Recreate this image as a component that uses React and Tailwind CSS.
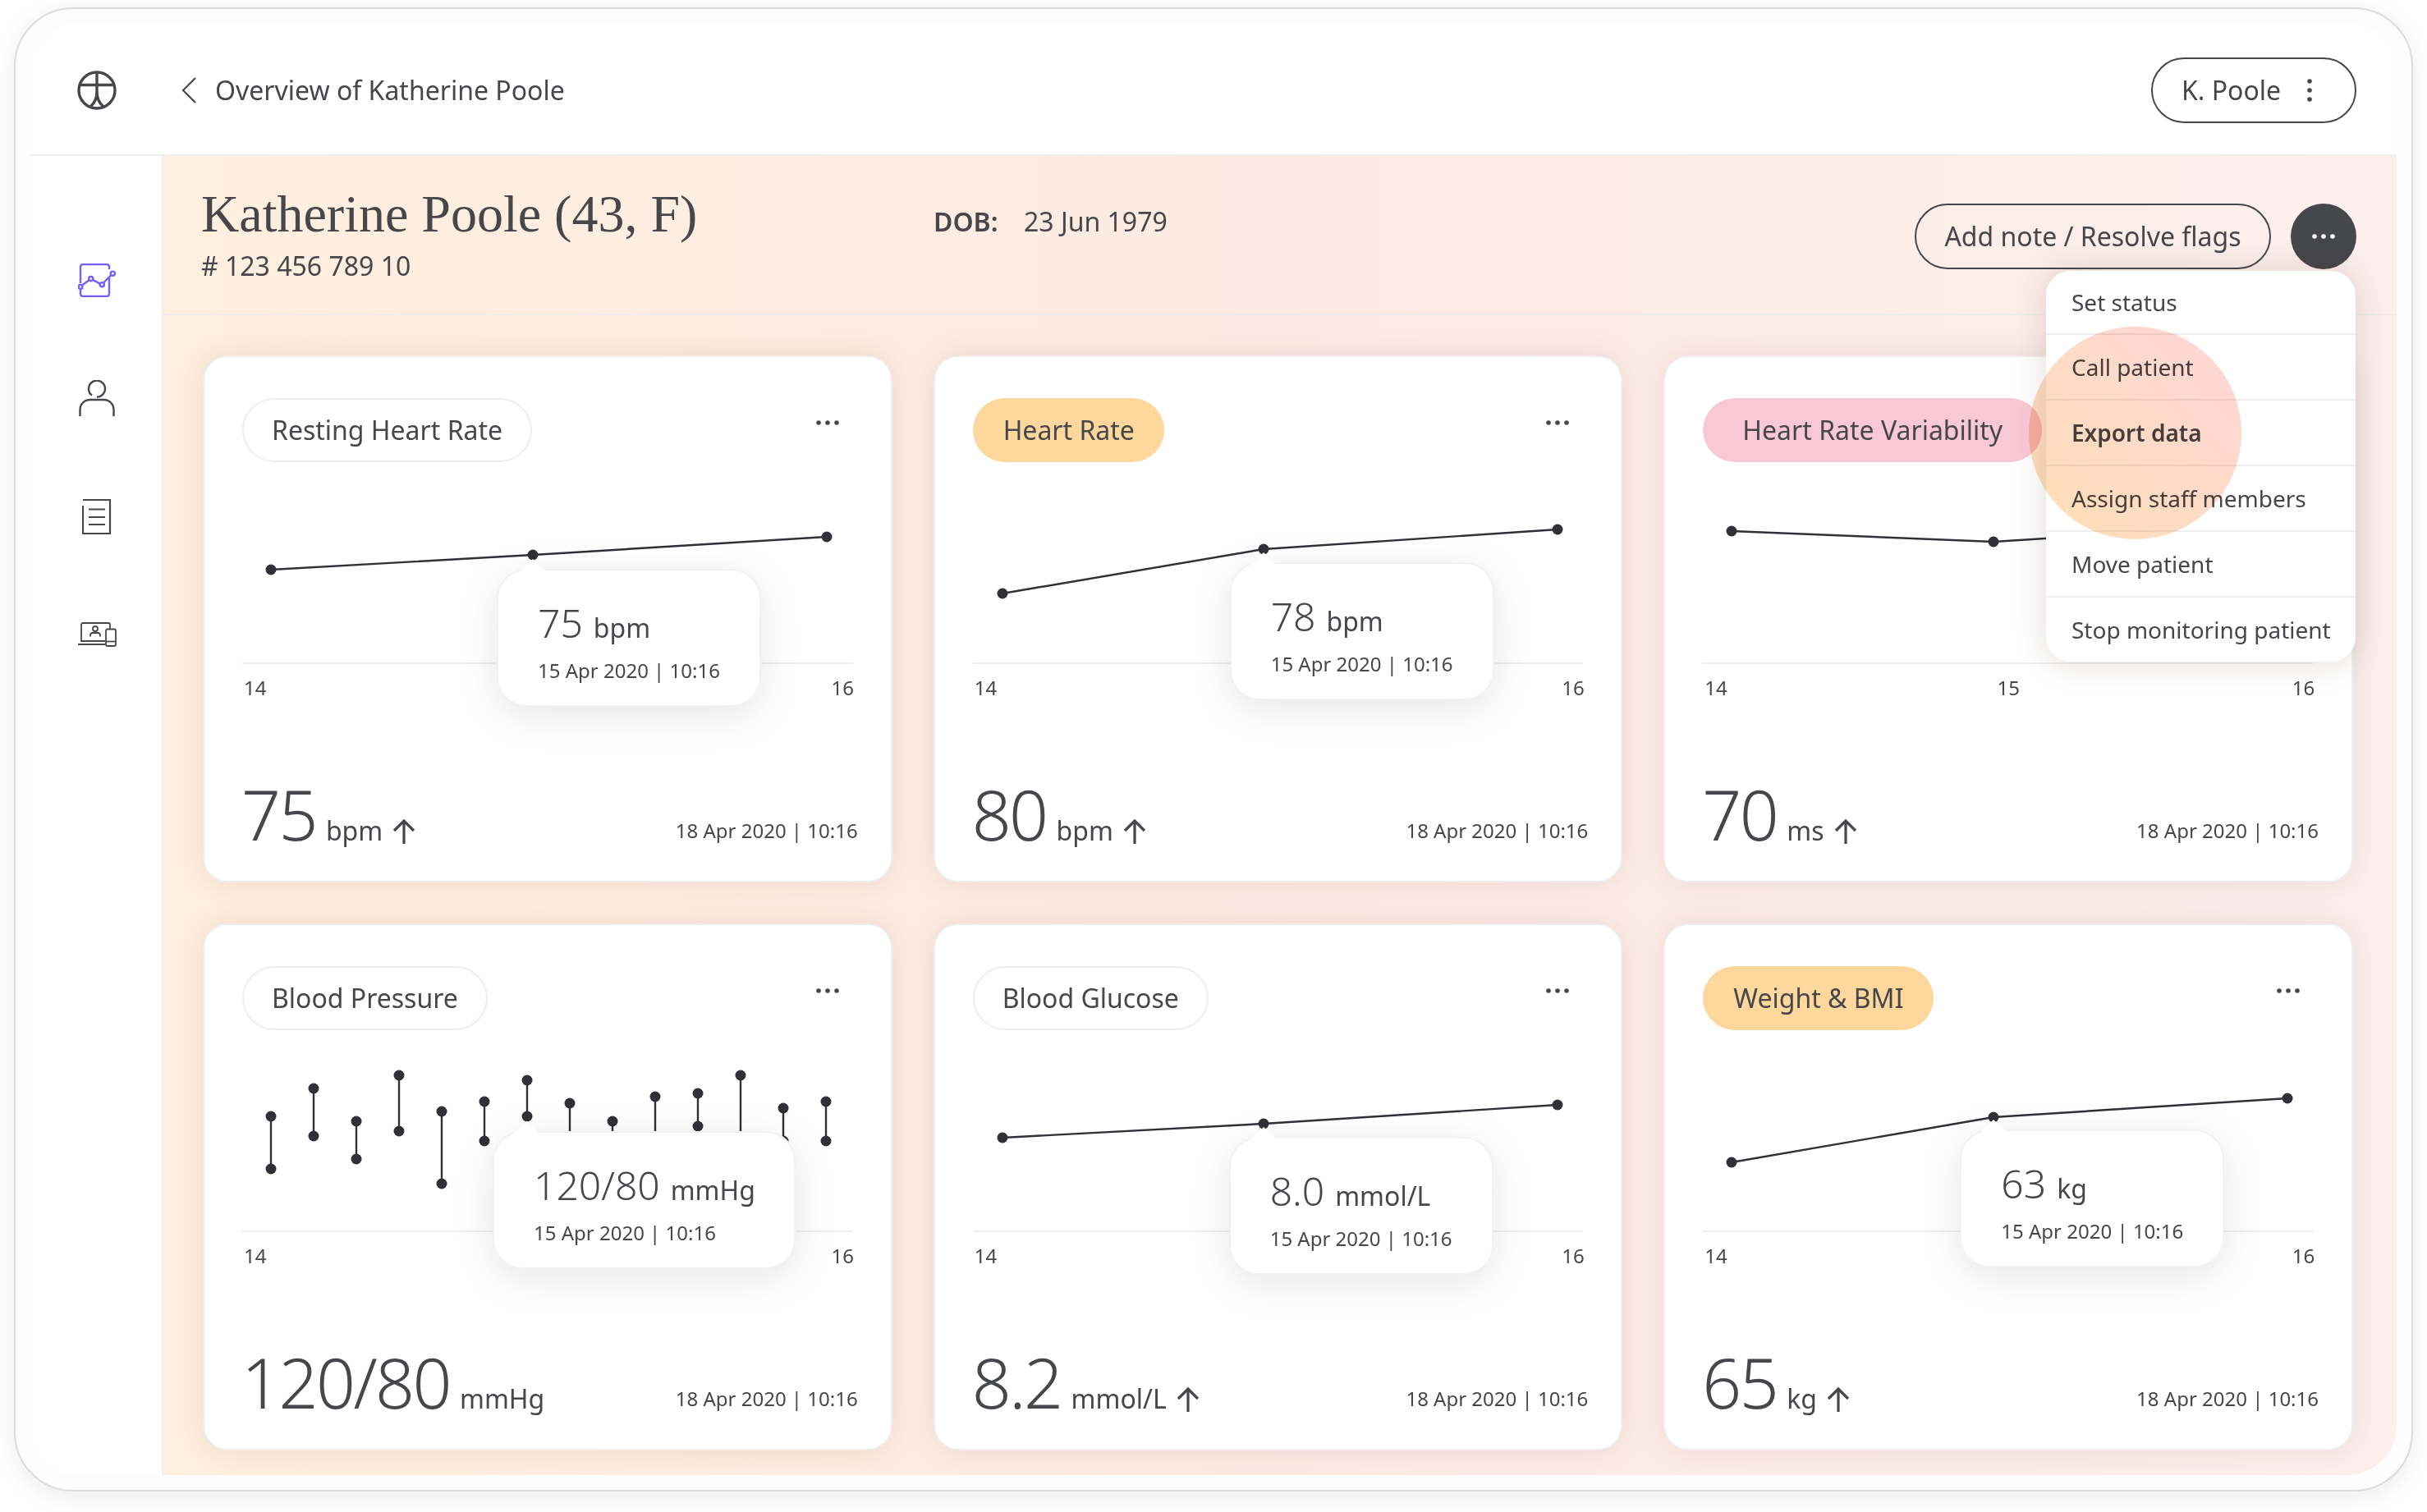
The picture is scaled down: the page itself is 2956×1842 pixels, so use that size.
import React from "react";

const font = { fontFamily: '"Noto Sans", sans-serif' };

const cards = [
  {
    title: "Resting Heart Rate",
    pill: "bg-white border-2 border-[#eeeeee] px-[34px]",
    points: [[35, 131], [354, 113], [712, 91]],
    tip: { left: 310, top: 130, w: 322, value: "75", unit: "bpm", x: 354 },
    value: "75",
    unit: "bpm",
    arrow: true,
  },
  {
    title: "Heart Rate",
    pill: "bg-[#fdd79b] pl-[37px] pr-[36px]",
    points: [[36, 160], [354, 106], [712, 82]],
    tip: { left: 313, top: 122, w: 322, value: "78", unit: "bpm", x: 354 },
    value: "80",
    unit: "bpm",
    arrow: true,
  },
  {
    title: "Heart Rate Variability",
    pill: "bg-[#f9c8d6] px-[48px]",
    points: [[35, 84], [354, 97], [712, 74]],
    labels: ["14", "15", "16"],
    value: "70",
    unit: "ms",
    arrow: true,
  },
  {
    title: "Blood Pressure",
    pill: "bg-white border-2 border-[#eeeeee] px-[34px]",
    bars: [
      [35, 105, 169], [87, 71, 129], [139, 111, 157], [191, 55, 123], [243, 99, 187],
      [295, 87, 135], [347, 61, 105], [399, 89, 135], [451, 111, 135], [503, 81, 135],
      [555, 77, 117], [607, 55, 135], [659, 95, 135], [711, 87, 135],
    ],
    tip: { left: 305, top: 123, w: 369, value: "120/80", unit: "mmHg", x: 347 },
    value: "120/80",
    unit: "mmHg",
    arrow: false,
  },
  {
    title: "Blood Glucose",
    pill: "bg-white border-2 border-[#eeeeee] px-[34px]",
    points: [[36, 131], [354, 114], [712, 91]],
    tip: { left: 312, top: 130, w: 322, value: "8.0", unit: "mmol/L", x: 354 },
    value: "8.2",
    unit: "mmol/L",
    arrow: true,
  },
  {
    title: "Weight & BMI",
    pill: "bg-[#fdd79b] pl-[37px] pr-[36px]",
    points: [[35, 161], [354, 106], [712, 83]],
    tip: { left: 313, top: 121, w: 322, value: "63", unit: "kg", x: 354 },
    value: "65",
    unit: "kg",
    arrow: true,
  },
];

const menuItems = ["Set status", "Call patient", "Export data", "Assign staff members", "Move patient", "Stop monitoring patient"];

function Dots({ color = "#46474b" }) {
  return (
    <svg width="28" height="6" viewBox="0 0 28 6" fill={color}>
      <circle cx="3" cy="3" r="2.8" />
      <circle cx="14" cy="3" r="2.8" />
      <circle cx="25" cy="3" r="2.8" />
    </svg>
  );
}

function Logo() {
  return (
    <svg width="48" height="48" viewBox="0 0 48 48" fill="none" stroke="#46474b" strokeWidth="3.4">
      <circle cx="24" cy="24" r="22" />
      <path d="M3 17.5h42M24 2v24M24 25c0 8-3 15-8 19M24 25c0 8 3 15 8 19" />
    </svg>
  );
}

function ChartIcon() {
  return (
    <svg width="46" height="41" viewBox="0 0 46 41" fill="none" stroke="#7a5cff" strokeWidth="2.4">
      <path d="M3 24V4a3 3 0 0 1 3-3h29a3 3 0 0 1 3 3v3M38 17v20a3 3 0 0 1-3 3H6a3 3 0 0 1-3-3v-5" />
      <path d="M5 26.5l8.5-6.2M18 20l8.800 4.600M31 23.500l9-9" />
      <circle cx="3" cy="28.4" r="2.4" />
      <circle cx="15.7" cy="18.6" r="2.6" />
      <circle cx="29.3" cy="25.7" r="2.6" />
      <circle cx="42.3" cy="12.2" r="2.6" />
    </svg>
  );
}

function PersonIcon() {
  return (
    <svg width="44" height="44" viewBox="0 0 44 44" fill="none" stroke="#46474b" strokeWidth="2.4">
      <path d="M16 18.6A10 10 0 1 1 22 20.6" />
      <path d="M1.5 44v-8a12 12 0 0 1 12-12h17a12 12 0 0 1 12 12v8" />
    </svg>
  );
}

function DocIcon() {
  return (
    <svg width="36" height="43" viewBox="0 0 36 43" fill="none" stroke="#46474b" strokeWidth="2.2">
      <path d="M1 1h33v41H1V8" />
      <path d="M8 12.5h20M8 22h20M8 31h20" strokeWidth="1.8" />
    </svg>
  );
}

function DeviceIcon() {
  return (
    <svg width="47" height="30" viewBox="0 0 47 30" fill="none" stroke="#46474b" strokeWidth="1.8">
      <path d="M4 20V3a2 2 0 0 1 2-2h31a2 2 0 0 1 2 2v5" />
      <path d="M4 20v3h29M0 27h33" />
      <rect x="34" y="8.5" width="12" height="20.5" rx="2" />
      <path d="M34 23.5h12" />
      <circle cx="21" cy="8" r="3" />
      <path d="M15 17.5V16a3 3 0 0 1 3-3h6a3 3 0 0 1 3 3v1.500" />
    </svg>
  );
}

function ArrowUp() {
  return (
    <svg width="28" height="30" viewBox="0 0 28 30" fill="none" stroke="#46474b" strokeWidth="3.2" className="self-end mb-[6px]">
      <path d="M14 30V2M2 14L14 2l12 12" />
    </svg>
  );
}

function Chart({ card }) {
  return (
    <svg width="743" height="246" viewBox="0 0 743 246" className="absolute left-0 top-0 overflow-visible" fill="#2f3136" stroke="#2f3136">
      {card.points && (
        <>
          <polyline points={card.points.map((p) => p.join(",")).join(" ")} fill="none" strokeWidth="2.4" />
          {card.points.map((p, i) => (
            <circle key={i} cx={p[0]} cy={p[1]} r="6.5" stroke="none" />
          ))}
        </>
      )}
      {card.bars &&
        card.bars.map((b, i) => (
          <g key={i}>
            <line x1={b[0]} x2={b[0]} y1={b[1]} y2={b[2]} strokeWidth="2.4" />
            <circle cx={b[0]} cy={b[1]} r="6.5" stroke="none" />
            <circle cx={b[0]} cy={b[2]} r="6.5" stroke="none" />
          </g>
        ))}
    </svg>
  );
}

function Tooltip({ tip }) {
  return (
    <div
      className="absolute bg-white rounded-[36px] border-2 border-[#f2f2f2] shadow-[0_10px_50px_rgba(0,0,0,0.1)] pl-[48px] pt-[40px] h-[168px]"
      style={{ left: tip.left, top: tip.top, width: tip.w }}
    >
      <svg width="32" height="15" viewBox="0 0 32 15" className="absolute top-[-14px]" style={{ left: tip.x - tip.left - 18 }}>
        <path d="M0 15L16 0l16 15z" fill="#fff" />
      </svg>
      <div className="flex items-baseline gap-[13px] leading-none">
        <span className="text-[48px] font-light text-[#46474b]">{tip.value}</span>
        <span className="text-[32px] text-[#46474b]">{tip.unit}</span>
      </div>
      <div className="text-[24px] leading-[32px] mt-[18px] text-[#46474b]">15 Apr 2020 | 10:16</div>
    </div>
  );
}

function Card({ card }) {
  const labels = card.labels || ["14", "16"];
  return (
    <div className="h-[642px] bg-white rounded-[30px] border-2 border-[#eeeef0] shadow-[0_0_36px_rgba(70,40,20,0.1)] pt-[50px] pl-[46px] pr-[40px] flex flex-col">
      <div className="flex justify-between items-start">
        <div className={`h-[78px] rounded-full flex items-center text-[32px] text-[#46474b] ${card.pill}`}>{card.title}</div>
        <div className="mt-[27px] mr-[23px] flex">
          <Dots />
        </div>
      </div>
      <div className="relative w-[743px] h-[246px] border-b-2 border-[#eeeeee]">
        <Chart card={card} />
        {card.tip && <Tooltip tip={card.tip} />}
      </div>
      <div className="w-[745px] pl-[2px] flex justify-between mt-[13px] text-[24px] leading-[32px] text-[#46474b]">
        {labels.map((l) => (
          <span key={l} className={l === "15" ? "mr-[3px]" : ""}>
            {l}
          </span>
        ))}
      </div>
      <div className="mt-auto mb-[39px] flex justify-between items-baseline">
        <div className="flex items-baseline gap-[12px] leading-none text-[#46474b] -ml-[1px]">
          <span className="text-[84px] font-light tracking-[-2.5px]">{card.value}</span>
          <span className="text-[32px]">{card.unit}</span>
          {card.arrow && <ArrowUp />}
        </div>
        <span className="text-[24px] text-[#46474b] -translate-y-[3px]">18 Apr 2020 | 10:16</span>
      </div>
    </div>
  );
}

export default function App() {
  return (
    <div className="w-[2956px] h-[1842px] bg-white pt-[9px] pl-[17px] overflow-hidden" style={font}>
      <div className="w-[2922px] h-[1808px] rounded-[72px] border-2 border-[#dcdcdc] bg-[#fdfdfd] shadow-[0_6px_30px_rgba(0,0,0,0.08)] p-[18px]">
        <div className="h-full flex flex-col bg-white rounded-[56px] overflow-hidden">
          <header className="h-[161px] shrink-0 border-b-2 border-[#eeeeee] flex items-center pl-[57px] pr-[49px] pt-[3px]">
            <Logo />
            <svg width="18" height="32" viewBox="0 0 18 32" fill="none" stroke="#46474b" strokeWidth="2.2" className="ml-[79px]">
              <path d="M17 1L2 16l15 15" />
            </svg>
            <span className="ml-[23px] text-[32px] text-[#46474b]">Overview of Katherine Poole</span>
            <div className="ml-auto h-[80px] w-[250px] rounded-full border-2 border-[#46474b] flex items-center pl-[35px] text-[32px] text-[#46474b]">
              K. Poole
              <svg width="6" height="28" viewBox="0 0 6 28" fill="#46474b" className="ml-[32px]">
                <circle cx="3" cy="3" r="2.8" />
                <circle cx="3" cy="14" r="2.8" />
                <circle cx="3" cy="25" r="2.8" />
              </svg>
            </div>
          </header>
          <div className="flex-1 flex min-h-0">
            <aside className="w-[162px] shrink-0 border-r-2 border-[#eeeeee] pt-[79px] pl-[2px] flex flex-col items-center">
              <div className="h-[144px] flex items-center">
                <ChartIcon />
              </div>
              <div className="h-[144px] flex items-center">
                <PersonIcon />
              </div>
              <div className="h-[144px] flex items-center">
                <DocIcon />
              </div>
              <div className="h-[144px] flex items-center">
                <DeviceIcon />
              </div>
            </aside>
            <main className="relative flex-1 bg-linear-to-r from-[#ffefdf] via-[#fdebe3] to-[#fdefed] rounded-br-[60px]">
              <div className="h-[194px] border-b-2 border-[#f0ebe8] flex items-start pl-[46px] pr-[49px] text-[#46474b]">
                <div className="w-[892px] pt-[31px]">
                  <h1 className="text-[64px] leading-[80px] font-normal" style={{ fontFamily: '"Liberation Serif", serif' }}>
                    Katherine Poole (43, F)
                  </h1>
                  <div className="text-[32px] leading-[44px] mt-[1px]">
                    # 123 456 789 10
                  </div>
                </div>
                <div className="pt-[58px] text-[32px] leading-[44px] flex">
                  <span className="font-semibold w-[110px]">DOB:</span>
                  <span>23 Jun 1979</span>
                </div>
                <div className="ml-auto mt-[58px] flex items-center gap-[24px]">
                  <div className="h-[80px] w-[434px] rounded-full border-2 border-[#46474b] flex items-center justify-center text-[32px]">
                    Add note / Resolve flags
                  </div>
                  <div className="w-[80px] h-[80px] rounded-full bg-[#46474b] flex items-center justify-center">
                    <Dots color="#ffffff" />
                  </div>
                </div>
              </div>
              <div className="grid grid-cols-3 gap-x-[50px] gap-y-[50px] pl-[48px] pr-[53px] pt-[49px]">
                {cards.map((c) => (
                  <Card key={c.title} card={c} />
                ))}
              </div>
              <div className="absolute right-[50px] top-[140px] w-[377px] z-10 bg-white rounded-[30px] shadow-[0_0_40px_rgba(70,40,20,0.16)] text-[#46474b] text-[28px]">
                {menuItems.map((m, i) => (
                  <div
                    key={m}
                    className={`flex items-center pl-[31px] ${i === 0 || i === 5 ? "h-[78px]" : "h-[80px]"} ${i < 5 ? "border-b-2 border-[#eeeeee]" : ""} ${m === "Export data" ? "font-semibold" : ""}`}
                  >
                    {m}
                  </div>
                ))}
              </div>
              <div className="absolute left-[2272px] top-[208px] w-[259px] h-[259px] rounded-full z-20 mix-blend-multiply bg-linear-to-tr from-[#fedfb5] to-[#fdd6d8]" />
            </main>
          </div>
        </div>
      </div>
    </div>
  );
}
